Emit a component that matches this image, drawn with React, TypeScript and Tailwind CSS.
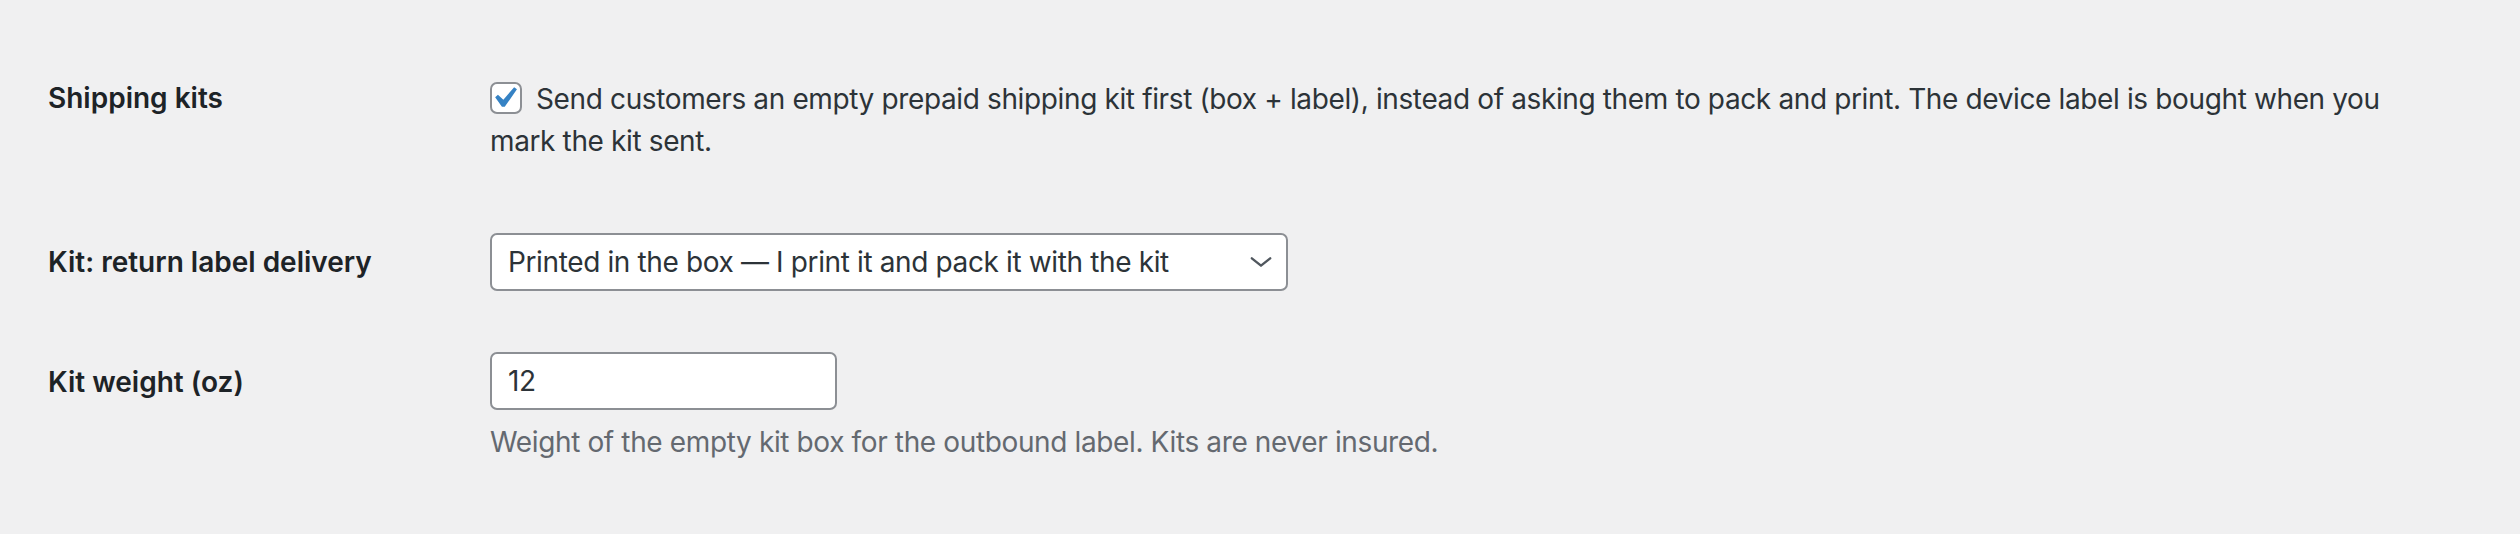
import React from "react";

const font = { fontFamily: 'Inter, "Noto Sans", sans-serif' };

function Checkbox() {
  return (
    <span className="relative inline-block w-[32px] h-[32px] align-middle -mt-[6px] mr-[14px] rounded-[7px] border-2 border-[#8c8f94] bg-white">
      <svg
        viewBox="0 0 20 20"
        className="absolute -left-[9px] -top-[7px] w-[42px] h-[42px]"
      >
        <path
          d="M14.83 4.89l1.34.94-5.81 8.38H9.02L5.78 9.67l1.34-1.25 2.57 2.4z"
          fill="#3582c4"
        />
      </svg>
    </span>
  );
}

export default function App() {
  return (
    <div
      className="w-[2520px] h-[534px] bg-[#f0f0f1] text-[28px] leading-[42px] text-[#2c3338] antialiased"
      style={font}
    >
      <div className="pl-[48px] pr-[100px]">
        {/* Row 1 */}
        <div className="grid grid-cols-[442px_1fr]">
          <div className="pt-[77px] font-semibold text-[#1d2327]">Shipping kits</div>
          <div className="pt-[78px] tracking-[-0.37px]">
            <label>
              <Checkbox />
              Send customers an empty prepaid shipping kit first (box + label), instead of asking them to pack and print. The device label is bought when you mark the kit sent.
            </label>
          </div>
        </div>

        {/* Row 2 */}
        <div className="grid grid-cols-[442px_1fr]">
          <div className="pt-[79px] font-semibold text-[#1d2327]">Kit: return label delivery</div>
          <div className="pt-[71px] tracking-[-0.37px]">
            <div className="w-[798px] h-[58px] rounded-[7px] border-2 border-[#8c8f94] bg-white flex items-center justify-between pl-[16px] pr-[14px]">
              <span>Printed in the box — I print it and pack it with the kit</span>
              <svg viewBox="0 0 24 12" className="w-[22px] h-[12px]" fill="none">
                <path d="M2 2l10 8 10-8" stroke="#50575e" strokeWidth="2.6" strokeLinecap="round" strokeLinejoin="round" />
              </svg>
            </div>
          </div>
        </div>

        {/* Row 3 */}
        <div className="grid grid-cols-[442px_1fr]">
          <div className="pt-[70px] font-semibold text-[#1d2327]">Kit weight (oz)</div>
          <div className="pt-[61px] tracking-[-0.37px]">
            <div className="w-[347px] h-[58px] rounded-[7px] border-2 border-[#8c8f94] bg-white flex items-center pl-[16px]">
              12
            </div>
            <p className="mt-[11px] text-[#646970]">
              Weight of the empty kit box for the outbound label. Kits are never insured.
            </p>
          </div>
        </div>
      </div>
    </div>
  );
}
